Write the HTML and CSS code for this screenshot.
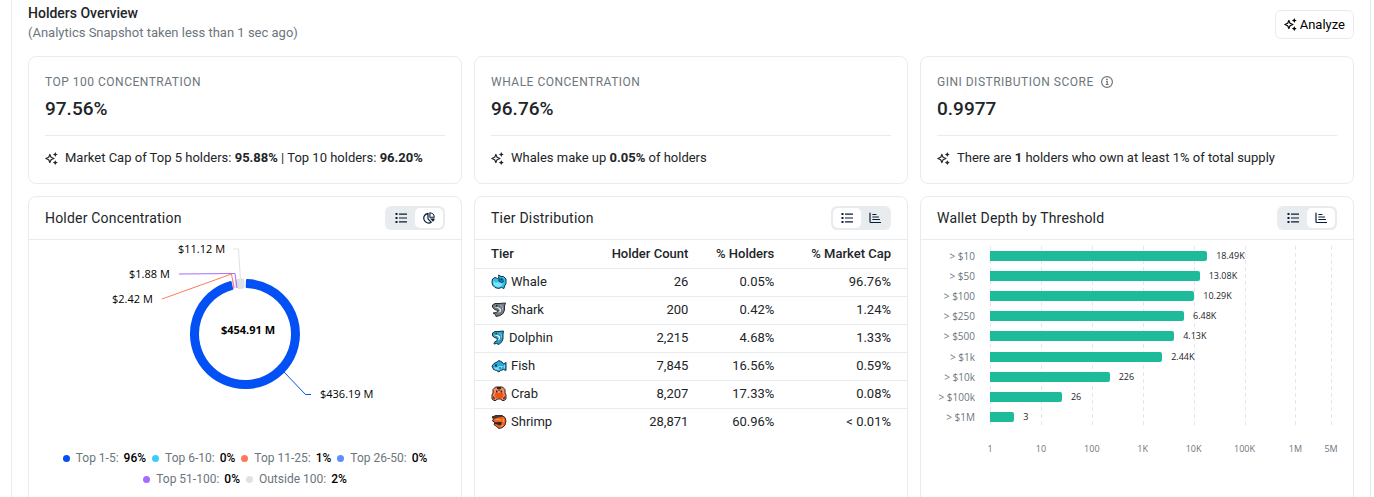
FILE: index.html
```html
<!DOCTYPE html>
<html lang="en">
<head>
    <meta charset="UTF-8">
    <meta name="viewport" content="width=device-width, initial-scale=1.0">
    <title>Holders Overview</title>
    <link rel="stylesheet" href="styles.css">
</head>
<body>

<!-- Shared icons -->
<svg class="sprite" aria-hidden="true">
    <symbol id="sparkle" viewBox="0 0 24 24">
        <path d="M9 4.5L11.200 9.800L16.500 12L11.200 14.200L9 19.500L6.800 14.200L1.500 12L6.800 9.800Z" fill="none" stroke="currentColor" stroke-width="2.200" stroke-linejoin="round"/>
        <path d="M19 0L20.500 3L23.500 4.500L20.500 6L19 9L17.500 6L14.500 4.500L17.500 3Z" fill="currentColor"/>
        <path d="M19 15L20.500 18L23.500 19.500L20.500 21L19 24L17.500 21L14.500 19.500L17.500 18Z" fill="currentColor"/>
    </symbol>
    <symbol id="list" viewBox="0 0 12 12">
        <path d="M0.500 1h2v2h-2zM0.500 5h2v2h-2zM0.500 9h2v2h-2zM4 1.500h8v1.200H4zM4 5.400h8v1.200H4zM4 9.300h8v1.200H4z" fill="currentColor"/>
    </symbol>
    <symbol id="bars" viewBox="0 0 12 12">
        <path d="M1 1V9.500Q1 10.500 2 10.500H11.500M3.800 2.500H7M3.800 5H9.500M3.800 7.500H10.500" fill="none" stroke="currentColor" stroke-width="1.200" stroke-linecap="round"/>
    </symbol>
    <symbol id="pie" viewBox="0 0 12 12">
        <path d="M5 1.300A4.900 4.900 0 1 0 8.300 10.300L5 6.800Z" fill="none" stroke="currentColor" stroke-width="1.200" stroke-linejoin="round"/>
        <path d="M6.900 0.700A4.500 4.500 0 0 1 11.200 5.200H6.900Z" fill="none" stroke="currentColor" stroke-width="1.100" stroke-linejoin="round"/>
        <path d="M7 6.500H11.800Q11.500 8.500 10 9.800Z" fill="currentColor"/>
    </symbol>
</svg>

<main class="panel">
    <header class="panel-header">
        <div>
            <h1>Holders Overview</h1>
            <p>(Analytics Snapshot taken less than 1 sec ago)</p>
        </div>
        <button type="button" class="analyze"><svg class="icon spark"><use href="#sparkle"/></svg>Analyze</button>
    </header>

    <section class="grid">
        <article class="card stat">
            <h2>Top 100 Concentration</h2>
            <div class="value">97.56%</div>
            <p class="note"><svg class="icon spark"><use href="#sparkle"/></svg><span>Market Cap of Top 5 holders: <b>95.88%</b> | Top 10 holders: <b>96.20%</b></span></p>
        </article>
        <article class="card stat">
            <h2>Whale Concentration</h2>
            <div class="value">96.76%</div>
            <p class="note"><svg class="icon spark"><use href="#sparkle"/></svg><span>Whales make up <b>0.05%</b> of holders</span></p>
        </article>
        <article class="card stat">
            <h2>Gini Distribution Score
                <svg class="info" viewBox="0 0 12 12"><circle cx="6" cy="6" r="5.400" fill="none" stroke="currentColor" stroke-width="1.200"/><path d="M5 5.500H6.200V8.500M4.700 8.500H7.600" fill="none" stroke="currentColor" stroke-width="1.200"/><circle cx="6" cy="3.400" r="0.900" fill="currentColor"/></svg>
            </h2>
            <div class="value">0.9977</div>
            <p class="note"><svg class="icon spark"><use href="#sparkle"/></svg><span>There are <b>1</b> holders who own at least 1% of total supply</span></p>
        </article>

        <!-- Holder concentration -->
        <article class="card chart-card">
            <header class="card-header">
                <h3>Holder Concentration</h3>
                <div class="toggle">
                    <button type="button" aria-label="Table"><svg class="icon"><use href="#list"/></svg></button>
                    <button type="button" class="active" aria-label="Chart"><svg class="icon"><use href="#pie"/></svg></button>
                </div>
            </header>
            <svg class="donut" viewBox="0 0 432 206">
                <path d="M217.980 40.040A54 54 0 1 1 201.750 41.910L203.600 48.670A47 47 0 1 0 217.720 47.030Z" fill="#0350f5" stroke="#0350f5" stroke-width="2" stroke-linejoin="round"/>
                <path d="M208.950 40.460A54 54 0 0 1 213.930 40.040L214.200 47.040A47 47 0 0 0 209.870 47.400Z" fill="#dee2e6" stroke="#dee2e6" stroke-width="3" stroke-linejoin="round"/>
                <path d="M203.500 40.500L205 48.500M206.500 40L207.500 48" fill="none" stroke="#dfd9ee" stroke-width="2"/>
                <path d="M204 9H209.500L211.500 40" class="lead" stroke="#dee2e6"/>
                <path d="M150 34L206 33.500L208 48" class="lead" stroke="#a66bff"/>
                <path d="M133 59L202.500 34L205 48" class="lead" stroke="#ff7a5c"/>
                <path d="M255 132L276.500 154.500H282" class="lead" stroke="#0350f5"/>
                <text x="149" y="13">$11.12 M</text>
                <text x="100" y="38">$1.88 M</text>
                <text x="83" y="63">$2.42 M</text>
                <text x="291" y="158">$436.19 M</text>
                <text x="219" y="94" class="total">$454.91 M</text>
            </svg>
            <ul class="legend">
                <li><i class="dot top5"></i>Top 1-5: <b>96%</b></li>
                <li><i class="dot top10"></i>Top 6-10: <b>0%</b></li>
                <li><i class="dot top25"></i>Top 11-25: <b>1%</b></li>
                <li><i class="dot top50"></i>Top 26-50: <b>0%</b></li>
                <li><i class="dot top100"></i>Top 51-100: <b>0%</b></li>
                <li><i class="dot outside"></i>Outside 100: <b>2%</b></li>
            </ul>
        </article>

        <!-- Tier distribution -->
        <article class="card chart-card">
            <header class="card-header">
                <h3>Tier Distribution</h3>
                <div class="toggle">
                    <button type="button" class="active" aria-label="Table"><svg class="icon"><use href="#list"/></svg></button>
                    <button type="button" aria-label="Chart"><svg class="icon"><use href="#bars"/></svg></button>
                </div>
            </header>
            <table>
                <thead>
                    <tr><th>Tier</th><th>Holder Count</th><th>% Holders</th><th>% Market Cap</th></tr>
                </thead>
                <tbody>
                    <tr>
                        <td><svg class="animal" viewBox="0 0 16 16">
                            <path d="M1.500 5L4 3.500L6.500 4.500L8 3L7.500 1L10 2.500H12.500L15 5V9.500L13.500 12L13 14.500L10.500 13.500L7.500 14.500L4 13.500L1.500 11L1 8Z" fill="#2fc0ee" stroke="#153445" stroke-linejoin="round"/>
                            <path d="M2 6.500L4 8.500H8L12 10L9.500 12.500L6 13L3 11Z" fill="#86e2fb"/>
                            <path d="M7.500 4L10 3.500L13 5V7.500L10.500 8.500L8 7Z" fill="#11a0d8"/>
                            <path d="M8 4L8 7L10.500 8.500L13 7" fill="none" stroke="#153445"/>
                            <path d="M9.500 4.500h2v2h-2z" fill="#153445"/>
                        </svg>Whale</td>
                        <td>26</td><td>0.05%</td><td>96.76%</td>
                    </tr>
                    <tr>
                        <td><svg class="animal" viewBox="0 0 16 16">
                            <path d="M1.500 3L4 1.500H8L14.500 1L13.500 4V8L12 11.500L9 13.500L5 14.500L4.500 12.500L2 11L5.500 10.500L7 8.500L3.500 7.500L1.500 5Z" fill="#747d83" stroke="#282e32" stroke-linejoin="round"/>
                            <path d="M3 5L7 6L9 8.500L7 11L10 9.500V7L7 5Z" fill="#e8eaec"/>
                            <path d="M9 3L11.500 4.500V8" fill="none" stroke="#a2abb1"/>
                            <path d="M5 3h1.500v1.500H5z" fill="#20262a"/>
                        </svg>Shark</td>
                        <td>200</td><td>0.42%</td><td>1.24%</td>
                    </tr>
                    <tr>
                        <td><svg class="animal dolphin" viewBox="0 0 14 16">
                            <path d="M1.500 3L4 1.500H7L12.500 1L12 4V9L10.500 12L8 14.500L5.500 13.500L3 14L3.500 12L6 10.500L6.500 8.500L3.500 7.500L1.500 6Z" fill="#2a9cc4" stroke="#143645" stroke-linejoin="round"/>
                            <path d="M2.500 5L6 6L8 8L6.500 11L9 9V6.500L6 4.500Z" fill="#def7ff"/>
                            <path d="M8 3L10.500 4.500V8" fill="none" stroke="#5bcdea"/>
                            <path d="M4.500 3h1.500v1.500H4.500z" fill="#143645"/>
                        </svg>Dolphin</td>
                        <td>2,215</td><td>4.68%</td><td>1.33%</td>
                    </tr>
                    <tr>
                        <td><svg class="animal" viewBox="0 0 16 16">
                            <path d="M1 8L3 5.500L6 4L8 2.500L11 4L12.500 6L15 4.500V12.500L12.500 11.500L9.500 12.500L8 14L5.500 12.500L2.500 11.500Z" fill="#2aa8dc" stroke="#123848" stroke-linejoin="round"/>
                            <path d="M2.500 9.500H6.500L8 8H12L10.500 10.500L8 12L4 11.500Z" fill="#7adcf7"/>
                            <path d="M4 6.500h2v2H4zM8 9.500h2v1H8z" fill="#123848"/>
                            <path d="M12.500 8.500L14 6.500V11Z" fill="#9bddf4"/>
                        </svg>Fish</td>
                        <td>7,845</td><td>16.56%</td><td>0.59%</td>
                    </tr>
                    <tr>
                        <td><svg class="animal" viewBox="0 0 16 16">
                            <path d="M4.500 1H11.500L14 3.500V7L15 9V13L13 14.500H11L10 13H6L5 14.500H3L1 13V9L2 7V3.500Z" fill="#f58a63" stroke="#332521" stroke-linejoin="round"/>
                            <path d="M5 6L6.500 7H9.500L11 6L12.500 9L11 12H5L3.500 9Z" fill="#f4520f"/>
                            <path d="M6 1h4v2H8.500v2h-1V3H6zM5 4.500h1.500v2H5zM9.500 4.500H11v2H9.500zM2.500 10L4 12.500L3.500 13.500L2 12zM13.500 10L12 12.500L12.500 13.500L14 12z" fill="#332521"/>
                        </svg>Crab</td>
                        <td>8,207</td><td>17.33%</td><td>0.08%</td>
                    </tr>
                    <tr>
                        <td><svg class="animal" viewBox="0 0 16 16">
                            <path d="M1 3L5 1.500H11L14 3.500L15 7L14 11L11.500 13.500L8 14.500L5.500 12.500L3 10.500L4 8.500L1.500 7L2.500 5Z" fill="#f0641e" stroke="#332420" stroke-linejoin="round"/>
                            <path d="M1 2.500L5 1.500H10L12 3L7 3.500L3 5Z" fill="#4b342c"/>
                            <path d="M7.500 8H10.500V10.500L8.500 11.500L6.500 10.500L4 10L3.500 8.500Z" fill="#332420"/>
                            <path d="M4.500 5.500H8L10 6.500M12.500 5V8M9.500 13L12 11" fill="none" stroke="#ff9c5f"/>
                        </svg>Shrimp</td>
                        <td>28,871</td><td>60.96%</td><td>&lt; 0.01%</td>
                    </tr>
                </tbody>
            </table>
        </article>

        <!-- Wallet depth -->
        <article class="card chart-card">
            <header class="card-header">
                <h3>Wallet Depth by Threshold</h3>
                <div class="toggle">
                    <button type="button" aria-label="Table"><svg class="icon"><use href="#list"/></svg></button>
                    <button type="button" class="active" aria-label="Chart"><svg class="icon"><use href="#bars"/></svg></button>
                </div>
            </header>
            <div class="depth">
                <div class="labels">
                    <span>&gt; $10</span><span>&gt; $50</span><span>&gt; $100</span><span>&gt; $250</span><span>&gt; $500</span><span>&gt; $1k</span><span>&gt; $10k</span><span>&gt; $100k</span><span>&gt; $1M</span>
                </div>
                <div class="plot">
                    <!-- log scale, 1 to 5M -->
                    <i class="line" style="left: 0%"></i>
                    <i class="line" style="left: 14.93%"></i>
                    <i class="line" style="left: 29.86%"></i>
                    <i class="line" style="left: 44.78%"></i>
                    <i class="line" style="left: 59.71%"></i>
                    <i class="line" style="left: 74.64%"></i>
                    <i class="line" style="left: 89.57%"></i>
                    <i class="line" style="left: 100%"></i>
                    <div class="row"><div class="bar" style="width: 63.7%"></div><span>18.49K</span></div>
                    <div class="row"><div class="bar" style="width: 61.5%"></div><span>13.08K</span></div>
                    <div class="row"><div class="bar" style="width: 59.9%"></div><span>10.29K</span></div>
                    <div class="row"><div class="bar" style="width: 56.9%"></div><span>6.48K</span></div>
                    <div class="row"><div class="bar" style="width: 54%"></div><span>4.13K</span></div>
                    <div class="row"><div class="bar" style="width: 50.5%"></div><span>2.44K</span></div>
                    <div class="row"><div class="bar" style="width: 35.1%"></div><span>226</span></div>
                    <div class="row"><div class="bar" style="width: 21.1%"></div><span>26</span></div>
                    <div class="row"><div class="bar" style="width: 7.1%"></div><span>3</span></div>
                </div>
                <div class="axis">
                    <span style="left: 0%">1</span>
                    <span style="left: 14.93%">10</span>
                    <span style="left: 29.86%">100</span>
                    <span style="left: 44.78%">1K</span>
                    <span style="left: 59.71%">10K</span>
                    <span style="left: 74.64%">100K</span>
                    <span style="left: 89.57%">1M</span>
                    <span style="left: 100%">5M</span>
                </div>
            </div>
        </article>
    </section>
</main>

</body>
</html>
```
FILE: styles.css
```css
* {
    box-sizing: border-box;
}

body {
    margin: 0;
    height: 100vh;
    overflow: hidden;
    font-family: Roboto, sans-serif;
    font-size: 13px;
    line-height: 20px;
    color: #212529;
    background-color: #fff;
}

h1, h2, h3, p, ul {
    margin: 0;
    padding: 0;
}

button {
    font-family: inherit;
    cursor: pointer;
}

.sprite {
    display: none;
}

.icon {
    width: 12px;
    height: 12px;
    flex: none;
}

.spark {
    width: 13px;
    height: 13px;
}

.panel {
    min-height: 100vh;
    margin: 0 3px 0 11px;
    padding: 3px 16px 0;
    border: 1px solid #e9ecef;
    border-width: 0 1px;
}

.panel-header {
    display: flex;
    justify-content: space-between;
    align-items: center;
    margin-bottom: 13px;
}

.panel-header h1 {
    font-size: 14px;
    font-weight: 500;
}

.panel-header p {
    color: #6c757d;
}

.analyze {
    display: flex;
    align-items: center;
    gap: 3px;
    height: 29px;
    margin-top: 2px;
    padding: 0 8px;
    border: 1px solid #e9ecef;
    border-radius: 6px;
    background-color: #fff;
    font-size: 13px;
    color: #000;
}

.grid {
    display: grid;
    grid-template-columns: repeat(3, 1fr);
    gap: 12px;
}

.card {
    min-width: 0;
    border: 1px solid #e9ecef;
    border-radius: 8px;
    background-color: #fff;
}

/* Stat cards */
.stat {
    padding: 15px 16px;
}

.stat h2 {
    display: flex;
    align-items: center;
    gap: 7px;
    font-size: 12px;
    font-weight: 400;
    letter-spacing: 0.5px;
    text-transform: uppercase;
    color: #6c757d;
}

.info {
    width: 12px;
    height: 12px;
}

.value {
    padding: 5px 0 14px;
    border-bottom: 1px solid #e9ecef;
    font-size: 19px;
    line-height: 24px;
    font-weight: 500;
}

.note {
    display: flex;
    align-items: center;
    gap: 7px;
    padding-top: 12px;
}

b {
    font-weight: 700;
}

/* Chart cards */
.chart-card {
    min-height: 320px;
}

.card-header {
    display: flex;
    justify-content: space-between;
    align-items: center;
    height: 43px;
    padding: 0 16px;
    border-bottom: 1px solid #e9ecef;
}

.card-header h3 {
    font-size: 14px;
    font-weight: 400;
    letter-spacing: 0.2px;
}

.toggle {
    display: flex;
    padding: 2px;
    border-radius: 6px;
    background-color: #e9ecef;
}

.toggle button {
    display: flex;
    align-items: center;
    justify-content: center;
    width: 28px;
    height: 20px;
    padding: 0;
    border: none;
    border-radius: 5px;
    background: none;
    color: #081d35;
}

.toggle .active {
    background-color: #fff;
}

/* Donut */
.donut {
    display: block;
    width: 100%;
    height: 206px;
}

.donut text {
    font-family: "Open Sans", sans-serif;
    font-size: 11px;
    fill: #000;
}

.donut .total {
    font-weight: 700;
    text-anchor: middle;
}

.lead {
    fill: none;
    stroke-width: 1;
}

.legend {
    display: flex;
    flex-wrap: wrap;
    justify-content: center;
    gap: 1px 6px;
    margin-top: 2px;
    list-style: none;
    font-size: 12px;
    color: #6c757d;
}

.legend li {
    display: flex;
    align-items: center;
}

.legend b {
    margin-left: 5px;
    font-weight: 500;
    color: #000;
}

.dot {
    width: 7px;
    height: 7px;
    margin-right: 6px;
    border-radius: 50%;
}

.top5 { background-color: #0350f5; }
.top10 { background-color: #38ccff; }
.top25 { background-color: #ff7a5c; }
.top50 { background-color: #5c8fff; }
.top100 { background-color: #a66bff; }
.outside { background-color: #dee2e6; }

/* Tier table */
table {
    width: 100%;
    border-collapse: collapse;
    table-layout: fixed;
}

th, td {
    height: 28px;
    padding: 0;
    text-align: right;
}

th {
    font-weight: 500;
}

tr:not(:last-child) td, th {
    border-bottom: 1px solid #e9ecef;
}

th:first-child, td:first-child {
    width: 26%;
    padding-left: 16px;
    text-align: left;
}

th:nth-child(2) {
    width: 101px;
}

th:nth-child(3) {
    width: 86px;
}

th:last-child, td:last-child {
    padding-right: 16px;
}

.animal {
    width: 16px;
    height: 16px;
    margin-right: 4px;
    vertical-align: -4px;
}

.dolphin {
    width: 14px;
}

/* Wallet depth */
.depth {
    display: grid;
    grid-template-columns: 54px 1fr;
    column-gap: 15px;
    padding: 6px 22px 0 0;
    font-family: "Open Sans", sans-serif;
    font-size: 9px;
    line-height: 12px;
}

.labels, .plot {
    display: grid;
    grid-template-rows: repeat(9, 1fr);
    align-items: center;
    height: 181px;
}

.labels {
    text-align: right;
    font-size: 10px;
    color: #6c757d;
}

.plot {
    position: relative;
}

.line {
    position: absolute;
    top: 0;
    bottom: 0;
    width: 1px;
    background: repeating-linear-gradient(#e6e6e6 0 4px, transparent 4px 7px);
}

.row {
    position: relative;
    display: flex;
    align-items: center;
    gap: 9px;
}

.bar {
    height: 10px;
    border-radius: 0 2px 2px 0;
    background-color: #1dbb99;
}

.axis {
    position: relative;
    grid-column: 2;
    height: 12px;
    margin-top: 16px;
    color: #6c757d;
}

.axis span {
    position: absolute;
    transform: translateX(-50%);
}
```
